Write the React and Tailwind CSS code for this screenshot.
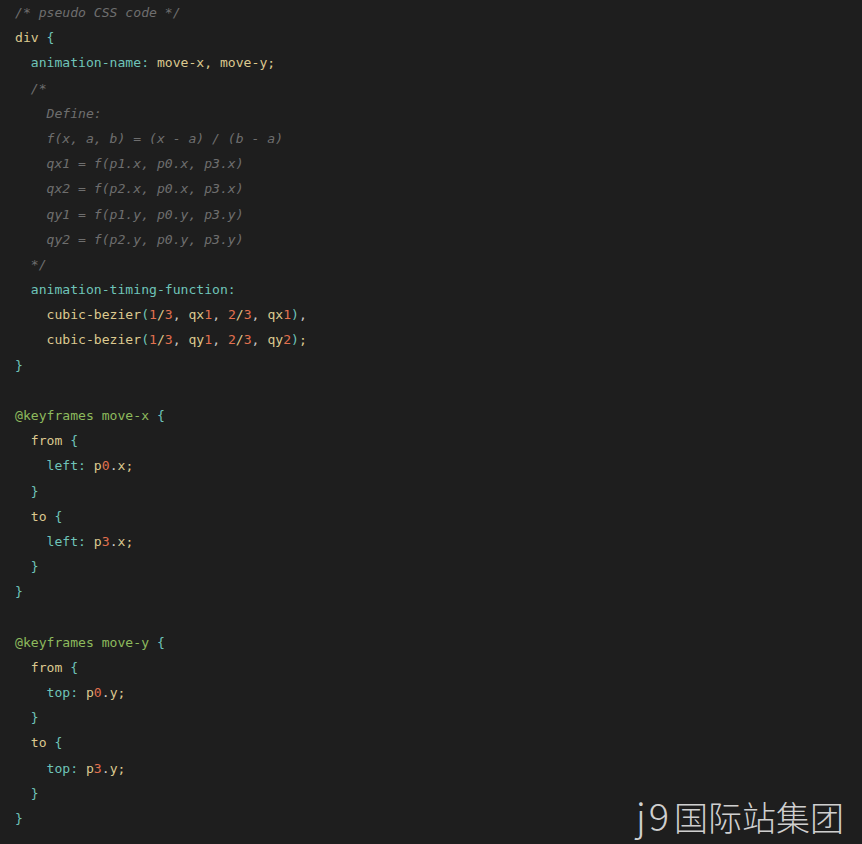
const C = {
  c: 'text-[#6e6e6e] italic',
  k: 'text-[#dcc98f]',
  p: 'text-[#6fc4b9]',
  n: 'text-[#e2714f]',
  a: 'text-[#8dba5d]',
  w: 'text-[#c6c6c6]',
};

// each line is a list of [text, colour key]
const lines = [
  [['/* pseudo CSS code */', 'c']],
  [['div', 'k'], [' {', 'p']],
  [['  animation-name:', 'p'], [' move-x, move-y;', 'k']],
  [['  /*', 'c']],
  [['    Define:', 'c']],
  [['    f(x, a, b) = (x - a) / (b - a)', 'c']],
  [['    qx1 = f(p1.x, p0.x, p3.x)', 'c']],
  [['    qx2 = f(p2.x, p0.x, p3.x)', 'c']],
  [['    qy1 = f(p1.y, p0.y, p3.y)', 'c']],
  [['    qy2 = f(p2.y, p0.y, p3.y)', 'c']],
  [['  */', 'c']],
  [['  animation-timing-function:', 'p']],
  [['    cubic-bezier', 'k'], ['(', 'p'], ['1', 'n'], ['/', 'k'], ['3', 'n'], [', ', 'w'], ['qx', 'k'], ['1', 'n'], [', ', 'w'], ['2', 'n'], ['/', 'k'], ['3', 'n'], [', ', 'w'], ['qx', 'k'], ['1', 'n'], [')', 'p'], [',', 'w']],
  [['    cubic-bezier', 'k'], ['(', 'p'], ['1', 'n'], ['/', 'k'], ['3', 'n'], [', ', 'w'], ['qy', 'k'], ['1', 'n'], [', ', 'w'], ['2', 'n'], ['/', 'k'], ['3', 'n'], [', ', 'w'], ['qy', 'k'], ['2', 'n'], [')', 'p'], [';', 'k']],
  [['}', 'p']],
  [],
  [['@keyframes move-x', 'a'], [' {', 'p']],
  [['  from', 'k'], [' {', 'p']],
  [['    left:', 'p'], [' p', 'k'], ['0', 'n'], ['.', 'w'], ['x;', 'k']],
  [['  }', 'p']],
  [['  to', 'k'], [' {', 'p']],
  [['    left:', 'p'], [' p', 'k'], ['3', 'n'], ['.', 'w'], ['x;', 'k']],
  [['  }', 'p']],
  [['}', 'p']],
  [],
  [['@keyframes move-y', 'a'], [' {', 'p']],
  [['  from', 'k'], [' {', 'p']],
  [['    top:', 'p'], [' p', 'k'], ['0', 'n'], ['.', 'w'], ['y;', 'k']],
  [['  }', 'p']],
  [['  to', 'k'], [' {', 'p']],
  [['    top:', 'p'], [' p', 'k'], ['3', 'n'], ['.', 'w'], ['y;', 'k']],
  [['  }', 'p']],
  [['}', 'p']],
];

export default function App() {
  return (
    <div className="relative w-[862px] h-[844px] overflow-hidden bg-[#1e1e1e]">
      <pre className="m-0 pl-[15px] font-['DejaVu_Sans_Mono','Liberation_Mono',monospace] text-[13.1px] leading-[25.19px]">
        {lines.map((line, i) => (
          <div key={i} className="h-[25.19px] whitespace-pre">
            {line.map(([text, kind], j) => (
              <span key={j} className={C[kind]}>{text}</span>
            ))}
          </div>
        ))}
      </pre>

      {/* watermark */}
      <div className="absolute right-[18px] bottom-[10px] flex items-end font-['Noto_Sans_CJK_SC',sans-serif] font-light leading-none text-[#cfcfcf]">
        <span className="text-[38px] tracking-[3px] mr-[2px]">j9</span>
        <span className="text-[34px]">国际站集团</span>
      </div>
    </div>
  );
}
